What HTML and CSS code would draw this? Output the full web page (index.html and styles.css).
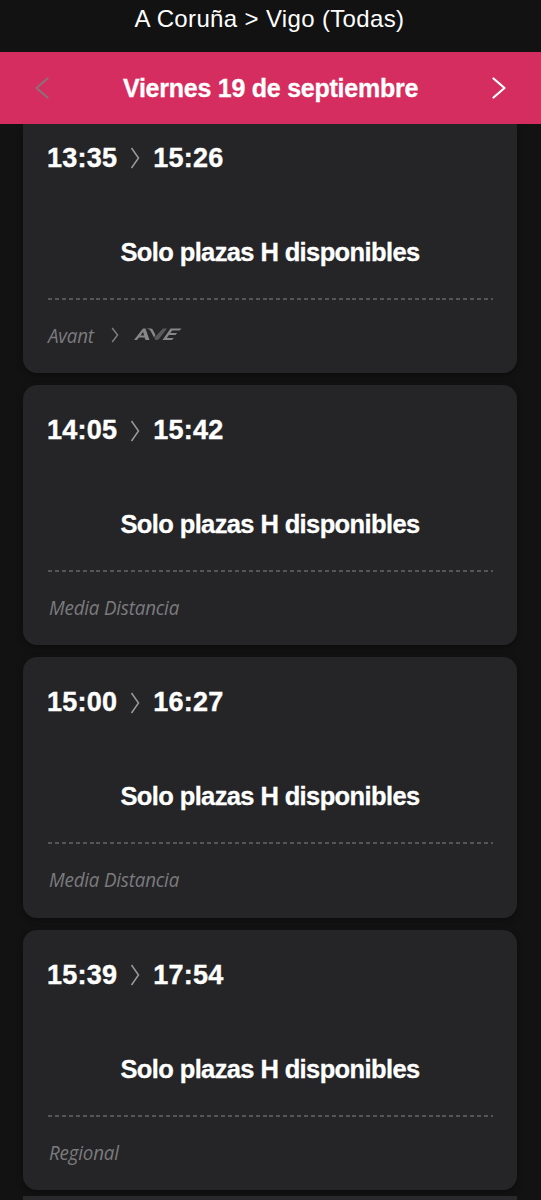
FILE: index.html
```html
<!DOCTYPE html>
<html lang="es">
  <head>
    <meta charset="UTF-8" />
    <meta name="viewport" content="width=device-width, initial-scale=1.0" />
    <title>A Coruña > Vigo (Todas)</title>
    <link rel="stylesheet" href="styles.css">
  </head>
  <body>
    <header class="route">A Coruña &gt; Vigo (Todas)</header>

    <!-- Selector de fecha -->
    <nav class="date-bar">
      <svg class="nav-arrow disabled" viewBox="0 0 16 22"><path d="M13.5 1.5 2.5 11l11 9.5" /></svg>
      <h1 class="date">Viernes 19 de septiembre</h1>
      <svg class="nav-arrow" viewBox="0 0 16 22"><path d="M2.5 1.5 13.5 11l-11 9.5" /></svg>
    </nav>

    <!-- Lista de trenes -->
    <main class="trains">
      <article class="card">
        <div class="times">
          <span class="time">13:35</span>
          <svg class="chevron" viewBox="0 0 10 22"><path d="M1.5 1 8.5 11l-7 10" /></svg>
          <span class="time">15:26</span>
        </div>
        <p class="message">Solo plazas H disponibles</p>
        <div class="divider"></div>
        <div class="service">
          <span class="service-name avant">Avant</span>
          <svg class="service-chevron" viewBox="0 0 8 16"><path d="M1.2 1 6.6 8l-5.4 7" /></svg>
          <svg class="ave" viewBox="0 0 48 13">
            <path d="M0 12 9 .5h2.500L15.500 12h-4l-.9-2.500H5L3 12zM6.500 7.500h3.500L9.200 3.800z" />
            <path d="M12.500.5h3.500c1.800 0 2.500.6 3.200 1.900L21.500 7 20 9.500 17 3.800C16 1.800 15 .9 12.500.5z" />
            <path class="ave-dark" d="M29 .5h4L25 11q-.8 1-2 1h-1.500L20.300 9.800z" />
            <path d="M36.500.5H47.500l-2 2h-7.300l-1.800 2.500h6.700l-1.600 2h-6.600L32.800 10h7L38 12h-9.500z" />
          </svg>
        </div>
      </article>

      <article class="card">
        <div class="times">
          <span class="time">14:05</span>
          <svg class="chevron" viewBox="0 0 10 22"><path d="M1.5 1 8.5 11l-7 10" /></svg>
          <span class="time">15:42</span>
        </div>
        <p class="message">Solo plazas H disponibles</p>
        <div class="divider"></div>
        <div class="service"><span class="service-name">Media Distancia</span></div>
      </article>

      <article class="card">
        <div class="times">
          <span class="time">15:00</span>
          <svg class="chevron" viewBox="0 0 10 22"><path d="M1.5 1 8.5 11l-7 10" /></svg>
          <span class="time">16:27</span>
        </div>
        <p class="message">Solo plazas H disponibles</p>
        <div class="divider"></div>
        <div class="service"><span class="service-name">Media Distancia</span></div>
      </article>

      <article class="card">
        <div class="times">
          <span class="time">15:39</span>
          <svg class="chevron" viewBox="0 0 10 22"><path d="M1.5 1 8.5 11l-7 10" /></svg>
          <span class="time">17:54</span>
        </div>
        <p class="message">Solo plazas H disponibles</p>
        <div class="divider"></div>
        <div class="service"><span class="service-name">Regional</span></div>
      </article>

      <div class="next-card"></div>
    </main>
  </body>
</html>
```
FILE: styles.css
```css
* {
  box-sizing: border-box;
}

body {
  display: flex;
  flex-direction: column;
  height: 1200px;
  margin: 0;
  overflow: hidden;
  background: #121212;
  color: #fff;
  font-family: "Liberation Sans", Arial, sans-serif;
}

/* Cabecera */
.route {
  height: 52px;
  flex: none;
  padding: 5px 2px 0 0;
  text-align: center;
  font-size: 24px;
  line-height: 28px;
  letter-spacing: 0.35px;
}

.date-bar {
  display: flex;
  flex: none;
  align-items: center;
  justify-content: space-between;
  height: 72px;
  padding: 0 34px;
  background: #d62d60;
}

.date {
  margin: 0;
  font-size: 25px;
  line-height: 30px;
  letter-spacing: -0.25px;
  white-space: nowrap;
  -webkit-text-stroke: 0.3px #fff;
}

.nav-arrow {
  width: 16px;
  height: 22px;
  fill: none;
  stroke: #fff;
  stroke-width: 2.2;
  stroke-linecap: round;
  stroke-linejoin: round;
}

.nav-arrow.disabled {
  stroke: #8c6f79;
}

/* Tarjetas */
.trains {
  display: flex;
  flex: 1;
  flex-direction: column;
  gap: 12px;
  min-height: 0;
  padding: 0 24px 0 23px;
  overflow: hidden;
}

.card {
  flex: none;
  height: 260.4px;
  padding: 31.5px 24px 0;
  border-radius: 14px;
  background: #252527;
  box-shadow: 0 2px 6px rgba(0, 0, 0, 0.35);
}

.card:first-child {
  height: 249px;
  padding-top: 20px;
  border-radius: 0 0 14px 14px;
}

.times {
  display: flex;
  align-items: center;
  gap: 13px;
  height: 28px;
  font-size: 27px;
  font-weight: bold;
  letter-spacing: 0.25px;
  -webkit-text-stroke: 0.4px #fff;
}

.chevron {
  width: 10px;
  height: 22px;
  fill: none;
  stroke: #9a9a9c;
  stroke-width: 1.5;
}

.message {
  margin: 63.5px 0 0;
  text-align: center;
  font-size: 25.5px;
  font-weight: bold;
  line-height: 32px;
  letter-spacing: -0.62px;
  white-space: nowrap;
  -webkit-text-stroke: 0.3px #fff;
}

.divider {
  height: 2px;
  margin: 30px 0 0 1px;
  background: repeating-linear-gradient(to right, #555557 0 4px, transparent 4px 6.92px);
}

.service {
  display: flex;
  align-items: center;
  height: 30px;
  margin-top: 20px;
  padding-left: 2px;
}

.service-name {
  color: #7b7b7d;
  font-family: "Open Sans", "Noto Sans", sans-serif;
  font-size: 18.8px;
  font-style: italic;
  line-height: 30px;
  letter-spacing: -0.2px;
  transform: scaleY(1.08);
}

.avant {
  margin-left: -1px;
}

.service-chevron {
  width: 8px;
  height: 16px;
  margin-left: 17px;
  fill: none;
  stroke: #808082;
  stroke-width: 1.4;
}

.ave {
  width: 48px;
  height: 13px;
  margin-left: 15px;
  fill: #87878a;
}

.ave-dark {
  fill: #59595b;
}

/* Asoma la siguiente tarjeta */
.next-card {
  flex: none;
  height: 4px;
  margin-top: -6px;
  background: #29292b;
}
```
